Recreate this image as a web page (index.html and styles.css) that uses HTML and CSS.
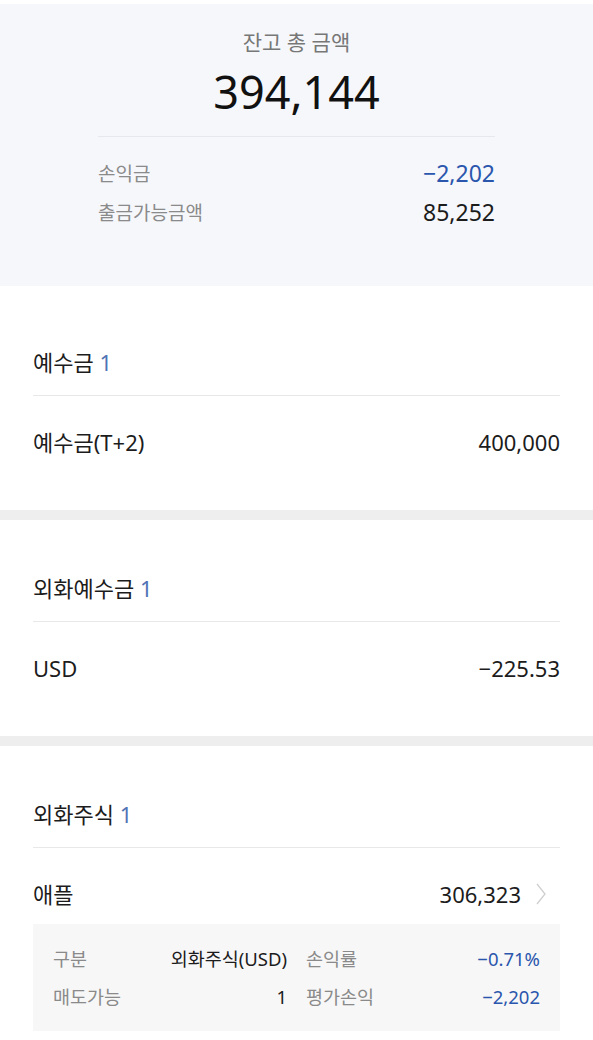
FILE: index.html
```html
<!DOCTYPE html>
<html lang="ko">
<head>
    <meta charset="UTF-8">
    <meta name="viewport" content="width=device-width, initial-scale=1.0">
    <title>잔고</title>
    <link rel="stylesheet" href="styles.css">
</head>
<body>
    <!-- 잔고 요약 -->
    <div class="summary">
        <div class="summary-title">잔고 총 금액</div>
        <div class="summary-total">394,144</div>
        <div class="summary-list">
            <div class="summary-row">
                <span class="summary-label">손익금</span>
                <span class="summary-value minus">−2,202</span>
            </div>
            <div class="summary-row">
                <span class="summary-label">출금가능금액</span>
                <span class="summary-value">85,252</span>
            </div>
        </div>
    </div>

    <div class="section">
        <h3 class="section-head">예수금 <span class="count">1</span></h3>
        <div class="item">
            <span>예수금(T+2)</span>
            <span>400,000</span>
        </div>
    </div>

    <div class="section">
        <h3 class="section-head">외화예수금 <span class="count">1</span></h3>
        <div class="item">
            <span>USD</span>
            <span>−225.53</span>
        </div>
    </div>

    <div class="section">
        <h3 class="section-head">외화주식 <span class="count">1</span></h3>
        <div class="item">
            <span>애플</span>
            <span class="item-link">
                306,323
                <svg class="chevron" width="10" height="22" viewBox="0 0 10 22">
                    <path d="M1 1 L9 11 L1 21" fill="none" stroke="#cfcfcf" stroke-width="1.3"/>
                </svg>
            </span>
        </div>
        <div class="detail">
            <div class="detail-cell">
                <span class="detail-label">구분</span>
                <span>외화주식(USD)</span>
            </div>
            <div class="detail-cell">
                <span class="detail-label">손익률</span>
                <span class="minus">−0.71%</span>
            </div>
            <div class="detail-cell">
                <span class="detail-label">매도가능</span>
                <span>1</span>
            </div>
            <div class="detail-cell">
                <span class="detail-label">평가손익</span>
                <span class="minus">−2,202</span>
            </div>
        </div>
    </div>
</body>
</html>
```

FILE: styles.css
```css
body {
    font-family: "Noto Sans", "Noto Sans CJK KR", sans-serif;
    color: #1c1c1c;
    background-color: #fff;
    margin: 0;
    padding: 0;
}

.minus {
    color: #2a56ad;
}

.summary {
    margin-top: 4px;
    margin-bottom: 8px;
    padding: 23px 0 0;
    height: 259px;
    background-color: #f6f7fb;
    text-align: center;
}

.summary-title {
    font-size: 21px;
    line-height: 30px;
    color: #777;
}

.summary-total {
    margin-top: 8px;
    font-size: 45px;
    line-height: 54px;
    color: #111;
}

.summary-list {
    margin: 17px 98px 0 98px;
    padding-top: 21px;
    border-top: 1px solid #e7e8ee;
}

.summary-row {
    display: flex;
    justify-content: space-between;
    align-items: center;
    height: 30px;
    margin-bottom: 9px;
}

.summary-label {
    font-size: 19px;
    color: #8a8a8a;
}

.summary-value {
    font-size: 23px;
}

.section {
    padding: 53px 33px 53px;
    border-bottom: 10px solid #eeeeee;
}

.section:last-child {
    border-bottom: none;
    padding-bottom: 0;
}

.section-head {
    margin: 0;
    padding-bottom: 18px;
    border-bottom: 1px solid #e8e8e8;
    font-size: 22px;
    font-weight: normal;
    line-height: 30px;
}

.count {
    color: #4f73b5;
}

.item {
    display: flex;
    justify-content: space-between;
    align-items: center;
    margin-top: 31px;
    font-size: 22px;
    line-height: 30px;
}

.item-link {
    display: flex;
    align-items: center;
    gap: 15px;
}

.chevron {
    margin-right: 14px;
}

.detail {
    display: grid;
    grid-template-columns: 1fr 1fr;
    column-gap: 19px;
    row-gap: 8px;
    margin-top: 15px;
    padding: 20px 20px 19px;
    background-color: #f7f7f7;
    font-size: 18.5px;
    line-height: 30px;
}

.detail-cell {
    display: flex;
    justify-content: space-between;
}

.detail-label {
    color: #8a8a8a;
}
```
